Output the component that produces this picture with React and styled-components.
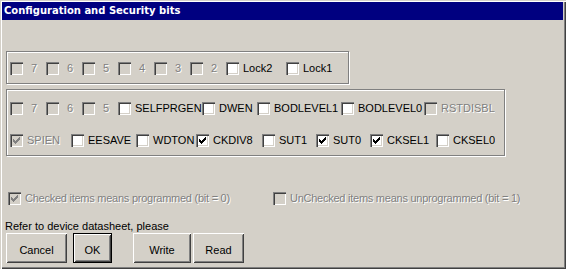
import React from "react";
import styled, { createGlobalStyle } from "styled-components";

const Global = createGlobalStyle`
  html, body { margin: 0; padding: 0; background: #d4d0c8; }
  body { font-family: "Liberation Sans", Arial, sans-serif; }
`;

const Win = styled.div`
  width: 566px;
  height: 269px;
  box-sizing: border-box;
  background: #d4d0c8;
  padding: 2px 3px 3px 2px;
  box-shadow: inset 1px 1px #d4d0c8, inset 2px 2px #ffffff,
    inset -1px -1px #404040, inset -2px -2px #808080;
  display: flex;
  flex-direction: column;
  font: 11px "Liberation Sans", Arial, sans-serif;
  color: #000;
  overflow: hidden;
`;

const TitleBar = styled.div`
  height: 18px;
  flex: none;
  background: #000080;
  color: #fff;
  font: bold 10px "DejaVu Sans", Verdana, sans-serif;
  line-height: 18px;
  padding-left: 2px;
  white-space: nowrap;
`;

const Body = styled.div`
  display: flex;
  flex-direction: column;
  flex: 1;
`;

const Group = styled.div`
  box-sizing: border-box;
  margin: ${(p) => p.$mt}px 0 0 4px;
  width: ${(p) => p.$w}px;
  height: ${(p) => p.$h}px;
  border: 1px solid #808080;
  box-shadow: inset 1px 1px #fff, 1px 1px #fff;
  padding: ${(p) => p.$pt}px 0 0 3px;
  display: flex;
  flex-direction: column;
  gap: 19px;
`;

const Row = styled.div`
  display: flex;
  align-items: center;
  height: 13px;
`;

const Item = styled.div`
  display: flex;
  align-items: center;
  gap: 4px;
  flex: none;
  width: ${(p) => (p.$w ? `${p.$w}px` : "auto")};
  overflow: hidden;
  white-space: pre;
`;

const Box = styled.span`
  position: relative;
  flex: none;
  width: 13px;
  height: 13px;
  box-sizing: border-box;
  background: ${(p) => (p.$disabled ? "#d4d0c8" : "#ffffff")};
  box-shadow: inset 1px 1px #808080, inset 2px 2px #404040,
    inset -1px -1px #ffffff, inset -2px -2px #d4d0c8;
  svg {
    position: absolute;
    left: 3px;
    top: 3px;
  }
`;

const Label = styled.span`
  color: ${(p) => (p.$disabled ? "#808080" : "#000")};
  text-shadow: ${(p) => (p.$disabled ? "1px 1px #ffffff" : "none")};
  line-height: 13px;
  padding-left: ${(p) => p.$lead || 0}px;
  letter-spacing: ${(p) => (p.$tight ? "-0.25px" : "normal")};
`;

const LegendRow = styled.div`
  display: flex;
  align-items: center;
  height: 13px;
  margin: ${(p) => p.$mt}px 0 0 6px;
`;

const Note = styled.div`
  margin: 15px 0 0 3px;
  line-height: 13px;
`;

const ButtonRow = styled.div`
  display: flex;
  margin: 0 0 0 2px;
`;

const Button = styled.button`
  box-sizing: border-box;
  width: ${(p) => p.$w}px;
  height: 30px;
  margin-left: ${(p) => p.$ml || 0}px;
  padding: 4px 0 0;
  background: #d4d0c8;
  border: ${(p) => (p.$default ? "1px solid #000" : "none")};
  box-shadow: inset 1px 1px #ffffff, inset -1px -1px #404040,
    inset 2px 2px #d4d0c8, inset -2px -2px #808080;
  font: 11px "Liberation Sans", Arial, sans-serif;
  color: #000;
  cursor: default;
`;

function Check({ checked, disabled }) {
  const cols = [2, 3, 4, 3, 2, 1, 0];
  return (
    <Box $disabled={disabled}>
      {checked && (
        <svg width="7" height="7" viewBox="0 0 7 7" shapeRendering="crispEdges">
          {cols.map((y, x) => (
            <rect key={x} x={x} y={y} width="1" height="3" fill={disabled ? "#808080" : "#000"} />
          ))}
        </svg>
      )}
    </Box>
  );
}

function CheckItem({ label, w, checked, disabled, textDisabled, lead, tight }) {
  return (
    <Item $w={w}>
      <Check checked={checked} disabled={disabled} />
      <Label $disabled={textDisabled ?? disabled} $lead={lead} $tight={tight}>
        {label}
      </Label>
    </Item>
  );
}

const row1 = [
  { label: "7", w: 36, disabled: true, lead: 4 },
  { label: "6", w: 36, disabled: true, lead: 4 },
  { label: "5", w: 36, disabled: true, lead: 4 },
  { label: "4", w: 36, disabled: true, lead: 4 },
  { label: "3", w: 36, disabled: true, lead: 4 },
  { label: "2", w: 36, disabled: true, lead: 4 },
  { label: "Lock2", w: 60 },
  { label: "Lock1" },
];

const row2 = [
  { label: "7", w: 36, disabled: true, lead: 4 },
  { label: "6", w: 36, disabled: true, lead: 4 },
  { label: "5", w: 36, disabled: true, lead: 4 },
  { label: "SELFPRGEN", w: 84 },
  { label: "DWEN", w: 55 },
  { label: "BODLEVEL1", w: 84 },
  { label: "BODLEVEL0", w: 83 },
  { label: "RSTDISBL", disabled: true },
];

const row3 = [
  { label: "SPIEN", w: 61, disabled: true, checked: true },
  { label: "EESAVE", w: 65 },
  { label: "WDTON", w: 60 },
  { label: "CKDIV8", w: 66, checked: true },
  { label: "SUT1", w: 54 },
  { label: "SUT0", w: 54, checked: true },
  { label: "CKSEL1", w: 66, checked: true },
  { label: "CKSEL0" },
];

function renderRow(items) {
  return (
    <Row>
      {items.map((it, i) => (
        <CheckItem key={i} {...it} />
      ))}
    </Row>
  );
}

export default function App() {
  return (
    <>
      <Global />
      <Win>
        <TitleBar>Configuration and Security bits</TitleBar>
        <Body>
          <Group $mt={31} $w={343} $h={33} $pt={10}>
            {renderRow(row1)}
          </Group>
          <Group $mt={5} $w={499} $h={67} $pt={12}>
            {renderRow(row2)}
            {renderRow(row3)}
          </Group>
          <LegendRow $mt={36}>
            <CheckItem
              w={265}
              label="Checked items means programmed (bit = 0)"
              checked
              disabled
              tight
            />
            <CheckItem label="UnChecked items means unprogrammed (bit = 1)" disabled tight />
          </LegendRow>
          <Note>Refer to device datasheet, please</Note>
          <ButtonRow>
            <Button $w={61} $ml={2}>Cancel</Button>
            <Button $w={39} $ml={6} $default>OK</Button>
            <Button $w={58} $ml={21}>Write</Button>
            <Button $w={51} $ml={2}>Read</Button>
          </ButtonRow>
        </Body>
      </Win>
    </>
  );
}
